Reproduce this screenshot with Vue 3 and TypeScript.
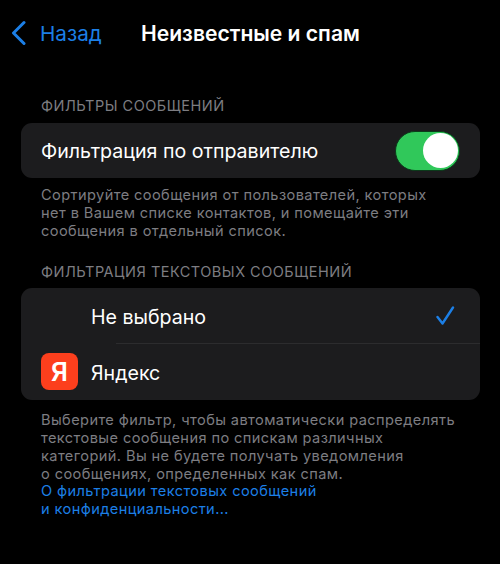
<script setup lang="ts">
const footerLines: string[] = [
  'Выберите фильтр, чтобы автоматически распределять',
  'текстовые сообщения по спискам различных',
  'категорий. Вы не будете получать уведомления',
  'о сообщениях, определенных как спам.',
]
</script>

<template>
  <main class="screen">
    <header class="nav">
      <div class="back">
        <svg class="chevron" width="16" height="26" viewBox="0 0 16 26" fill="none">
          <path d="M14 2.5 3.5 13 14 23.5" stroke="#1c7fe6" stroke-width="3" stroke-linecap="round" stroke-linejoin="round" />
        </svg>
        <span>Назад</span>
      </div>
      <h1 class="title">Неизвестные и спам</h1>
    </header>

    <section class="group first">
      <h2 class="group-head">ФИЛЬТРЫ СООБЩЕНИЙ</h2>
      <div class="card">
        <div class="row switch-row">
          <span class="label">Фильтрация по отправителю</span>
          <div class="switch"><div class="knob"></div></div>
        </div>
      </div>
      <p class="foot">
        Сортируйте сообщения от пользователей, которых<br />
        нет в Вашем списке контактов, и помещайте эти<br />
        сообщения в отдельный список.
      </p>
    </section>

    <section class="group second">
      <h2 class="group-head">ФИЛЬТРАЦИЯ ТЕКСТОВЫХ СООБЩЕНИЙ</h2>
      <div class="card">
        <div class="row option top">
          <span class="icon-slot"></span>
          <span class="label grow">Не выбрано</span>
          <svg class="check" width="20" height="20" viewBox="0 0 20 20" fill="none">
            <path d="M2.5 11 7.5 17.5 18 1.5" stroke="#1c7fe6" stroke-width="2.4" stroke-linecap="round" stroke-linejoin="round" />
          </svg>
        </div>
        <div class="divider"></div>
        <div class="row option bottom">
          <span class="icon-slot">
            <span class="yandex">Я</span>
          </span>
          <span class="label grow">Яндекс</span>
        </div>
      </div>
      <p class="foot foot-long">
        <template v-for="line in footerLines" :key="line">{{ line }}<br /></template>
        <span class="link">О фильтрации текстовых сообщений<br />и конфиденциальности...</span>
      </p>
    </section>
  </main>
</template>

<style>
html, body { margin: 0; background: #000; }
</style>

<style scoped>
.screen {
  width: 500px;
  height: 564px;
  overflow: hidden;
  background: #000;
  color: #fff;
  font-family: Inter, "Liberation Sans", sans-serif;
  box-sizing: border-box;
}
.nav {
  display: flex;
  align-items: center;
  height: 34px;
  padding: 16px 0 0 10px;
}
.back {
  display: flex;
  align-items: center;
  gap: 14px;
  width: 131px;
  flex: none;
  color: #1c7fe6;
  font-size: 20.7px;
}
.chevron { flex: none; }
.title {
  margin: 0;
  font-size: 21.1px;
  font-weight: 600;
  white-space: nowrap;
}
.group { padding: 0 20px 0 21px; }
.first { margin-top: 47px; }
.second { margin-top: 23px; }
.group-head {
  margin: 0 0 8px 20px;
  font-size: 14.5px;
  line-height: 18px;
  font-weight: 400;
  color: #7d7d82;
  letter-spacing: 0.5px;
}
.second .group-head { margin-bottom: 7px; }
.card {
  background: #1c1c1e;
  border-radius: 11px;
  overflow: hidden;
}
.row {
  display: flex;
  align-items: center;
  padding: 0 20px;
}
.switch-row { height: 55px; }
.switch-row .label { flex: 1; padding-top: 1px; }
.option { box-sizing: border-box; padding-top: 2px; }
.top { height: 55px; }
.bottom { height: 56px; }
.label {
  font-size: 19.6px;
  white-space: nowrap;
}
.grow { flex: 1; }
.switch {
  display: flex;
  align-items: center;
  justify-content: flex-end;
  width: 65px;
  height: 40px;
  padding: 1px;
  box-sizing: border-box;
  border-radius: 20px;
  background: #30c85a;
  border: 1.5px solid #0b3a1a;
}
.knob {
  width: 35px;
  height: 35px;
  border-radius: 50%;
  background: #fff;
}
.icon-slot {
  display: flex;
  width: 50px;
  flex: none;
  margin-top: -3px;
}
.yandex {
  display: flex;
  align-items: center;
  justify-content: center;
  width: 37px;
  height: 37px;
  border-radius: 8px;
  background: #fc3f1d;
  color: #fff;
  font-size: 26px;
  font-weight: 600;
}
.check { margin-right: 5px; margin-top: -2px; }
.divider {
  height: 1px;
  margin-left: 95px;
  background: #2c2c2e;
}
.foot {
  margin: 9px 0 0 20px;
  font-size: 14.6px;
  line-height: 17.8px;
  color: #7d7d82;
  letter-spacing: 0.4px;
  white-space: nowrap;
}
.foot-long { margin-top: 12px; line-height: 17.7px; }
.link { color: #1c7fe6; }
</style>
